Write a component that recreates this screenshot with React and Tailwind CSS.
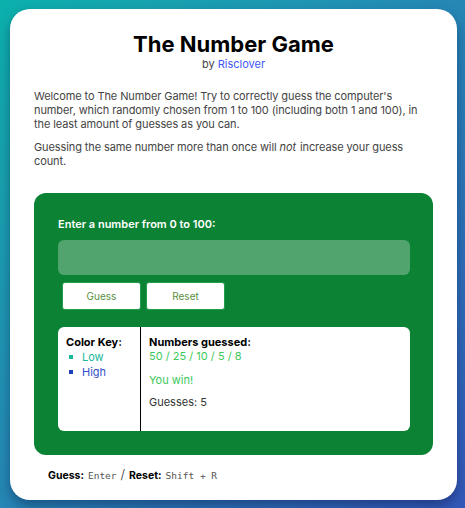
export default function App() {
  return (
    <div
      className="w-[465px] h-[508px] overflow-hidden bg-gradient-to-br from-[#0ab0ac] to-[#3358ba] pt-[9px] px-[10px]"
      style={{ fontFamily: "Inter, 'Noto Sans', sans-serif" }}
    >
      <div className="w-[447px] h-[491px] bg-white rounded-[20px] shadow-[0_6px_12px_rgba(0,0,40,0.35)] px-[24px] pt-[24px]">
        <h1 className="text-center text-[22px] leading-[22px] font-bold text-black">
          The Number Game
        </h1>
        <p className="text-center text-[11px] leading-[14px] text-[#444] mt-[2px]">
          by <span className="text-[#4057f5]">Risclover</span>
        </p>
        <div className="mt-[18px] text-[11px] leading-[14px] text-[#444] tracking-[-0.1px]">
          <p>
            Welcome to The Number Game! Try to correctly guess the computer's number, which randomly chosen from 1 to 100 (including both 1 and 100), in the least amount of guesses as you can.
          </p>
          <p className="mt-[9px]">
            <span>Guessing the same number more than once will </span>
            <i className="pr-[1px]">not</i>
            <span> increase your guess</span> <span>count.</span>
          </p>
        </div>
        <div className="mt-[25px] w-[399px] bg-[#0b8234] rounded-[12px] px-[24px] pt-[24px] pb-[24px]">
          <p className="text-white text-[11px] leading-[14px] font-semibold">
            Enter a number from 0 to 100:
          </p>
          <div className="mt-[9px] h-[35px] w-[352px] rounded-[6px] bg-[#52a46e]"></div>
          <div className="mt-[7px] flex gap-[5px] pl-[4px]">
            <button className="w-[79px] h-[28px] bg-white rounded-[3px] border border-[#20a04a] text-[10px] text-[#5a8f40]">
              Guess
            </button>
            <button className="w-[79px] h-[28px] bg-white rounded-[3px] border border-[#20a04a] text-[10px] text-[#5a8f40]">
              Reset
            </button>
          </div>
          <div className="mt-[17px] w-[352px] h-[104px] bg-white rounded-[6px] flex text-[11px] leading-[14px]">
            <div className="w-[83px] border-r border-black pl-[8px] pt-[8px]">
              <p className="font-bold text-black">Color Key:</p>
              <ul className="mt-[1px]">
                <li className="flex items-center text-[#16b89a]">
                  <span className="w-[4px] h-[4px] bg-[#16b89a] ml-[3px] mr-[9px]"></span>Low
                </li>
                <li className="flex items-center text-[#3150c8] mt-[1px]">
                  <span className="w-[4px] h-[4px] bg-[#1a3fb8] ml-[3px] mr-[9px]"></span>High
                </li>
              </ul>
            </div>
            <div className="pl-[8px] pt-[8px]">
              <p className="font-bold text-black">Numbers guessed:</p>
              <p className="text-[#3cc85a]">50 / 25 / 10 / 5 / 8</p>
              <p className="text-[#3cc85a] mt-[10px]">You win!</p>
              <p className="text-[#333] mt-[8px]">Guesses: 5</p>
            </div>
          </div>
        </div>
        <div className="mt-[12px] pl-[14px] text-[10.5px] leading-[14px] text-[#333] flex items-baseline">
          <b className="text-black">Guess:</b>
          <code className="ml-[4px] text-[9.5px] text-[#555]" style={{ fontFamily: "'DejaVu Sans Mono', monospace" }}>Enter</code>
          <span className="mx-[4px] text-[13px] font-light">/</span>
          <b className="text-black">Reset:</b>
          <code className="ml-[4px] text-[9.5px] text-[#555]" style={{ fontFamily: "'DejaVu Sans Mono', monospace" }}>Shift + R</code>
        </div>
      </div>
    </div>
  );
}
